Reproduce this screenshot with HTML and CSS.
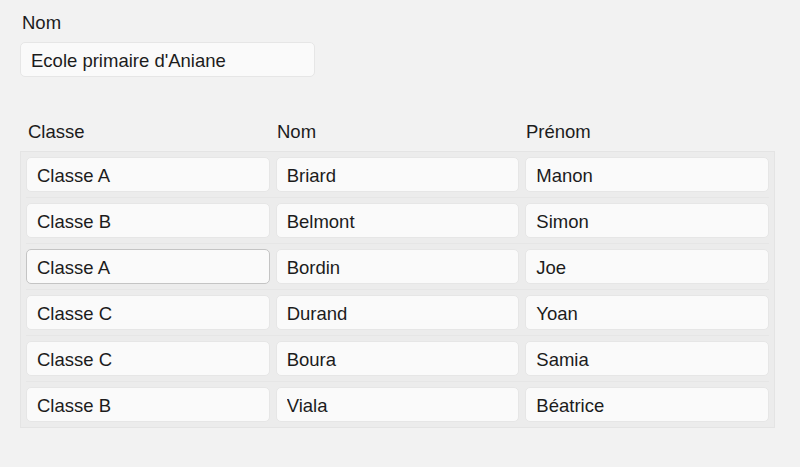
FILE: index.html
```html
<!DOCTYPE html>
<html lang="fr">
<head>
    <meta charset="UTF-8">
    <meta name="viewport" content="width=device-width, initial-scale=1.0">
    <title>Ecole</title>
    <link rel="stylesheet" href="styles.css">
</head>
<body>
    <div class="form">
        <label class="label" for="nom">Nom</label>
        <input class="field field-school" id="nom" type="text" value="Ecole primaire d'Aniane">

        <div class="grid-head">
            <span>Classe</span>
            <span>Nom</span>
            <span>Prénom</span>
        </div>
        <div class="grid">
            <div class="row">
                <input class="field" type="text" value="Classe A">
                <input class="field" type="text" value="Briard">
                <input class="field" type="text" value="Manon">
            </div>
            <div class="row">
                <input class="field" type="text" value="Classe B">
                <input class="field" type="text" value="Belmont">
                <input class="field" type="text" value="Simon">
            </div>
            <div class="row">
                <input class="field is-active" type="text" value="Classe A">
                <input class="field" type="text" value="Bordin">
                <input class="field" type="text" value="Joe">
            </div>
            <div class="row">
                <input class="field" type="text" value="Classe C">
                <input class="field" type="text" value="Durand">
                <input class="field" type="text" value="Yoan">
            </div>
            <div class="row">
                <input class="field" type="text" value="Classe C">
                <input class="field" type="text" value="Boura">
                <input class="field" type="text" value="Samia">
            </div>
            <div class="row">
                <input class="field" type="text" value="Classe B">
                <input class="field" type="text" value="Viala">
                <input class="field" type="text" value="Béatrice">
            </div>
        </div>
    </div>
</body>
</html>
```

FILE: styles.css
```css
body {
    margin: 0;
    padding: 12px 20px;
    background: #f2f2f2;
    color: #1c1c1c;
    font-family: 'Liberation Sans', Arial, sans-serif;
    font-size: 18.5px;
}
.form {
    width: 755px;
}
.label {
    display: block;
    padding-left: 2px;
    line-height: 21px;
}
.field {
    box-sizing: border-box;
    display: block;
    width: 100%;
    height: 35px;
    margin: 0;
    padding: 3px 10px 0;
    background: #fafafa;
    border: 1px solid #e6e6e6;
    border-radius: 5px;
    color: #1c1c1c;
    font-family: inherit;
    font-size: 18.5px;
    outline: none;
}
.field-school {
    width: 295px;
    margin-top: 9px;
}
.field.is-active {
    border-color: #c4c4c4;
}
.grid-head {
    display: grid;
    grid-template-columns: 1fr 1fr 1fr;
    column-gap: 6px;
    margin-top: 44px;
    padding: 0 6px 9px 8px;
    line-height: 21px;
}
.grid {
    background: #ececec;
    border: 1px solid #e4e4e4;
    padding: 0 5px;
}
.row {
    display: grid;
    grid-template-columns: 1fr 1fr 1fr;
    column-gap: 6px;
    padding: 5px 0;
    border-top: 1px solid #e6e6e6;
}
.row:first-child {
    border-top: none;
}
```
